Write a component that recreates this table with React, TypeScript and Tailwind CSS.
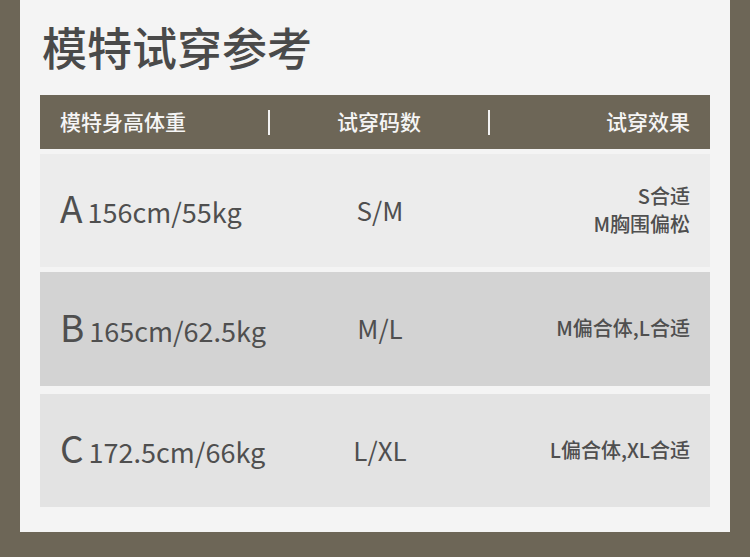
import * as React from "react";

type Row = {
  tag: string;
  size: string;
  fit: string[];
  bg: string;
  h: string;
  mt: string;
};

const rows: Row[] = [
  { tag: "A", size: "156cm/55kg", fit: ["S合适", "M胸围偏松"], bg: "bg-[#ececec]", h: "h-[113px]", mt: "mt-[5px]" },
  { tag: "B", size: "165cm/62.5kg", fit: ["M偏合体,L合适"], bg: "bg-[#d3d3d3]", h: "h-[114px]", mt: "mt-[5px]" },
  { tag: "C", size: "172.5cm/66kg", fit: ["L偏合体,XL合适"], bg: "bg-[#e3e3e3]", h: "h-[113px]", mt: "mt-[8px]" },
];

const sizes = ["S/M", "M/L", "L/XL"];

function Divider() {
  return <span className="block w-[2px] h-[25px] bg-[#f2f2f2]" />;
}

export default function App() {
  return (
    <div className="w-[750px] h-[557px] bg-[#6d6657] font-['Noto_Sans_CJK_SC','Noto_Sans',sans-serif]">
      <div className="mx-5 px-5 pb-[25px] bg-[#f4f4f4]">
        <div className="h-[95px] flex items-center pl-[2px] pb-[2px]">
          <h1 className="text-[45px] leading-none font-medium text-[#4a4a4a]">模特试穿参考</h1>
        </div>

        <div className="h-[54px] bg-[#6d6657] px-5 grid grid-cols-[210px_220px_1fr] items-center text-[21px] font-medium text-[#f5f5f5]">
          <div className="flex items-center justify-between">
            <span>模特身高体重</span>
            <Divider />
          </div>
          <div className="flex items-center">
            <span className="flex-1 text-center">试穿码数</span>
            <Divider />
          </div>
          <div className="text-right">试穿效果</div>
        </div>

        {rows.map((r, i) => (
          <div
            key={r.tag}
            className={`${r.bg} ${r.h} ${r.mt} px-5 grid grid-cols-[210px_220px_1fr] items-center text-[#4f4f4f]`}
          >
            <div className="flex items-baseline gap-[5px] pb-[6px]">
              <span className="text-[37px] leading-none">{r.tag}</span>
              <span className="text-[27px] leading-none">{r.size}</span>
            </div>
            <div className="text-center text-[26px] leading-none pb-[2px]">{sizes[i]}</div>
            <div className="text-right text-[20px] leading-[28px] font-medium pb-[2px]">
              {r.fit.map((f) => (
                <div key={f}>{f}</div>
              ))}
            </div>
          </div>
        ))}
      </div>
    </div>
  );
}
